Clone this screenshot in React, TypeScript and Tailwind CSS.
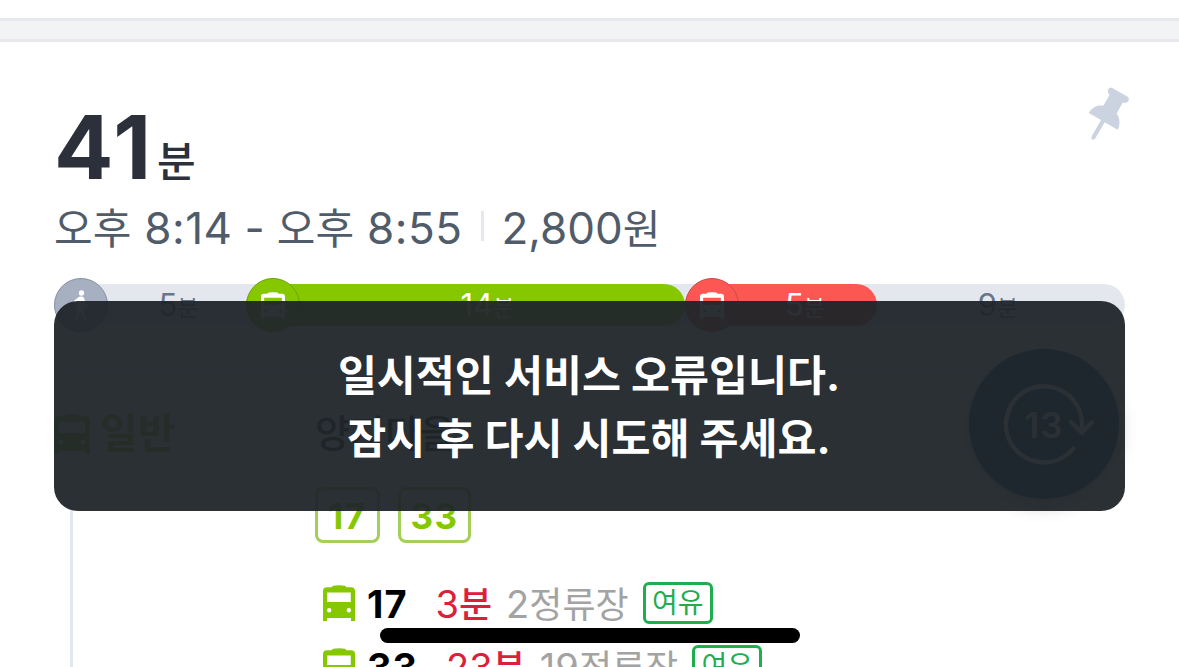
import React from 'react';

const BusIcon: React.FC<{ className?: string }> = ({ className }) => (
  <svg viewBox="0 0 32 36" className={className} fill="currentColor">
    <path
      fillRule="evenodd"
      d="M10 0.8Q16 -0.4 22 0.8L23.500 2.300H28Q32 2.300 32 6.300V36H28V33H4V36H0V6.300Q0 2.300 4 2.300H8.500ZM4.200 7.500V17H27.800V7.500ZM6.200 23a2.200 2.200 0 1 0 0 4.400a2.200 2.200 0 1 0 0 -4.400ZM25.800 23a2.200 2.200 0 1 0 0 4.400a2.200 2.200 0 1 0 0 -4.400Z"
    />
  </svg>
);

const WalkIcon = () => (
  <svg viewBox="0 0 20 32" className="w-5 h-8 mt-0.5" fill="none" stroke="white" strokeLinecap="round" strokeLinejoin="round">
    <circle cx="10.500" cy="3" r="2.700" fill="white" stroke="none" />
    <path d="M10 10L9.500 19" strokeWidth="7" />
    <path d="M8 8.500L4 11.500M12 10L15 16M8.500 20L5 30M10.500 20L14 30" strokeWidth="2.400" />
  </svg>
);

const PinIcon = () => (
  <svg viewBox="0 0 44 54" className="w-11 h-[54px]" fill="#cbd2e0">
    <path d="M22.200 2.500C23.200 0.700 25 0.300 26.700 1.200L41.300 9.600C43 10.700 43.300 12.500 42.400 14C41.200 15.800 39 16 36.800 15.600L30.600 26.500C34 31 34.500 37 31.700 42.700L18.700 35.200L9.200 51.600C7.700 54 4.300 52.200 5.600 49.600L15.100 33.100L2.800 26C6 20.500 11.500 17.800 17.300 18.800L23.700 7.700C22 6.300 21.300 4.200 22.200 2.500Z" />
  </svg>
);

const RefreshIcon = () => (
  <svg viewBox="0 0 96 84" className="absolute left-[34px] top-[34px] w-24 h-[84px]" fill="none" stroke="white" strokeWidth="4.500">
    <path d="M79 49V41A38 38 0 1 0 71.500 64" />
    <path d="M67 38L79 49.500L90 38" />
  </svg>
);

interface Segment {
  minutes: number;
  width: string;
  bar: string;
  circle?: string;
  text: string;
  icon?: 'walk' | 'bus';
}

const segments: Segment[] = [
  { minutes: 5, width: 'w-[192px]', bar: '', circle: 'bg-[#a6b0c0] border-[#8790a0]', text: 'text-[#68758b] pl-[57px]', icon: 'walk' },
  { minutes: 14, width: 'w-[439px]', bar: 'bg-[#86c800]', circle: 'bg-[#86c800] border-[#6da300]', text: 'text-white pl-[44px]', icon: 'bus' },
  { minutes: 5, width: 'w-[192px]', bar: 'bg-[#fc5753]', circle: 'bg-[#fc5753] border-[#cc4a48]', text: 'text-white pl-[48px]', icon: 'bus' },
  { minutes: 9, width: 'w-[248px]', bar: '', text: 'text-[#68758b] pr-[6px]' },
];

const arrivals = [
  { bus: '17', minutes: '3', stops: '2', seat: '여유' },
  { bus: '33', minutes: '23', stops: '19', seat: '여유' },
];

const RouteBar = () => (
  <div className="h-[54px] flex items-center">
    <div className="w-full h-[42px] flex items-center rounded-full bg-[#e4e8ee]">
      {segments.map((s, i) => (
        <div key={i} className={`relative h-[42px] shrink-0 flex items-center justify-center rounded-full ${s.width} ${s.bar}`}>
          {s.icon && (
            <div className={`absolute left-0 -top-1.5 size-[54px] rounded-full border flex items-center justify-center ${s.circle}`}>
              {s.icon === 'walk' ? <WalkIcon /> : <BusIcon className="w-6 h-[27px] text-white" />}
            </div>
          )}
          <span className={`flex items-baseline -mt-0.5 text-[31px] leading-none ${s.text}`}>
            {s.minutes}
            <span className="text-[23px]">분</span>
          </span>
        </div>
      ))}
    </div>
  </div>
);

const Toast = () => (
  <div className="absolute left-[54px] top-[301px] w-[1071px] h-[210px] rounded-[24px] bg-[#1f2529]/95 flex flex-col items-center justify-center pt-0.5 pr-px text-white text-[42.4px] leading-[63px] font-bold">
    <p>일시적인 서비스 오류입니다.</p>
    <p>잠시 후 다시 시도해 주세요.</p>
  </div>
);

const App: React.FC = () => {
  return (
    <div className="relative w-[1179px] h-[667px] overflow-hidden bg-white whitespace-nowrap font-['Inter','Noto_Sans_CJK_KR',sans-serif]">
      <div className="mt-[18px] h-6 bg-[#f1f3f5] border-y-[3px] border-[#e6e8ec]" />

      <main className="px-[54px]">
        <header className="h-[158px] flex justify-between">
          <h1 className="flex items-baseline pt-[52px] text-[#2b303b] leading-[107px]">
            <span className="text-[88px] font-bold tracking-[3px]">41</span>
            <span className="ml-[3px] -translate-y-0.5 text-[42px] font-medium">분</span>
          </h1>
          <div className="pt-[45px] -mr-[5px]">
            <PinIcon />
          </div>
        </header>

        <div className="h-[56px] flex items-center text-[44px] leading-[56px] text-[#505c69]">
          <span className="flex items-baseline">
            <span className="text-[42px]">오후</span>
            <span className="ml-[13px] tracking-[0.5px]">8:14</span>
            <span className="mx-[12px]">-</span>
            <span className="text-[42px]">오후</span>
            <span className="ml-[13px] tracking-[0.5px]">8:55</span>
          </span>
          <span className="ml-[19px] mr-[17px] w-[3px] h-[30px] mb-1 bg-[#e4e8ee]" />
          <span className="flex items-baseline">
            2,800
            <span className="text-[41px]">원</span>
          </span>
        </div>

        <div className="pt-[22px]">
          <RouteBar />
        </div>

        <section className="mt-[37px] border-t-2 border-[#e4e8ee] flex">
          <div className="w-[261px]">
            <div className="h-[126px] flex items-center text-[#86c800] text-[41px] font-bold">
              <BusIcon className="w-9 h-10 mr-[10px]" />
              일반
            </div>
            <div className="ml-4 w-[3px] h-[180px] bg-[#e4e8ee]" />
          </div>

          <div>
            <div className="h-[116px] flex items-center pt-2 text-[38px] font-medium text-[#222]">양지마을</div>
            <div className="flex gap-[18px] text-[35px] leading-[52px] font-bold tracking-[1.5px] text-[#86c800]">
              <span className="w-[65px] h-14 flex justify-center rounded-lg border-3 border-[#a4cf5b]">17</span>
              <span className="w-[73px] h-14 flex justify-center rounded-lg border-3 border-[#a4cf5b]">33</span>
            </div>

            <ul className="pt-[28px] pl-2">
              {arrivals.map((a) => (
                <li key={a.bus} className="h-[63px] flex items-center text-[38px]">
                  <BusIcon className="w-8 h-9 text-[#86c800]" />
                  <span className="ml-[12px] pt-1 font-bold tracking-[1px] text-black">{a.bus}</span>
                  <span className="ml-[28px] flex items-baseline pt-1 text-[#db2039]">
                    {a.minutes}
                    <span className="text-[36px] font-medium">분</span>
                  </span>
                  <span className="ml-[14px] flex items-baseline pt-1 text-[#a3a3a3]">
                    {a.stops}
                    <span className="text-[36px]">정류장</span>
                  </span>
                  <span className="ml-[14px] w-[70px] h-[42px] flex items-center justify-center rounded-md border-3 border-[#1fae4e] text-[28px] text-[#1fae4e]">
                    {a.seat}
                  </span>
                </li>
              ))}
            </ul>
          </div>
        </section>
      </main>

      <button className="absolute left-[969px] top-[349px] size-[150px] rounded-full bg-[#1d4390] shadow-[0_6px_18px_rgba(0,0,0,0.25)] flex items-center justify-center pt-0.5 text-[35px] font-semibold tracking-[1px] text-white">
        <RefreshIcon />
        13
      </button>

      <Toast />
      <div className="absolute left-[380px] top-[628px] w-[420px] h-[15px] rounded-full bg-black" />
    </div>
  );
};

export default App;
